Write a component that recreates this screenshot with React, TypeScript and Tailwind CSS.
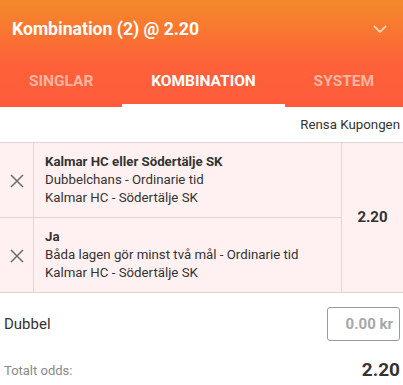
import React from "react";

function XIcon() {
  return (
    <svg width="16" height="16" viewBox="0 0 16 16" fill="none" stroke="#6b6b6b" strokeWidth="1.5" strokeLinecap="butt">
      <path d="M2 2 L14 14 M14 2 L2 14" />
    </svg>
  );
}

function Bet({ title, market, match }: { title: string; market: string; match: string }) {
  return (
    <div className="flex h-[74px]">
      <div className="w-[34px] flex items-center justify-center border-r border-[#e6d2d2] pt-[2px]">
        <XIcon />
      </div>
      <div className="flex-1 flex flex-col justify-center pl-[11px] text-[13.25px] leading-[18px] text-[#333]">
        <div className="font-bold">{title}</div>
        <div>{market}</div>
        <div>{match}</div>
      </div>
    </div>
  );
}

export default function App() {
  return (
    <div className="w-[403px] h-[385px] bg-white overflow-hidden" style={{ fontFamily: "Roboto, 'Liberation Sans', sans-serif" }}>
      <div className="bg-[linear-gradient(to_bottom,#f48a2a,#fe6139_60%,#ff5b3b)] h-[107px] flex flex-col">
        <div className="h-[56px] flex items-center justify-between pl-[12px] pr-[16px] pt-[2px]">
          <div className="text-white font-bold text-[17.6px]">Kombination (2) @ 2.20</div>
          <svg width="14" height="9" viewBox="0 0 14 9" fill="none" stroke="#ffd2b0" strokeWidth="1.8">
            <path d="M1 1 L7 7 L13 1" />
          </svg>
        </div>
        <div className="flex flex-1 text-[15.5px] font-bold uppercase">
          <div className="flex-auto flex items-center justify-center text-[#ffb5a0] pt-[1px]">Singlar</div>
          <div className="flex-auto flex items-center justify-center text-white border-b-[3px] border-white pt-[4px]">Kombination</div>
          <div className="flex-auto flex items-center justify-center text-[#ffb5a0] pt-[1px]">System</div>
        </div>
      </div>
      <div className="h-[36px] flex items-center justify-end pr-[3px] text-[13.3px] text-[#333] border-b border-[#e6d2d2]">
        Rensa Kupongen
      </div>
      <div className="flex bg-[#fff1f1] border-b border-[#e6d2d2]">
        <div className="flex-1 flex flex-col">
          <div className="border-b border-[#e6d2d2]">
            <Bet title="Kalmar HC eller Södertälje SK" market="Dubbelchans - Ordinarie tid" match="Kalmar HC - Södertälje SK" />
          </div>
          <Bet title="Ja" market="Båda lagen gör minst två mål - Ordinarie tid" match="Kalmar HC - Södertälje SK" />
        </div>
        <div className="w-[62px] border-l border-[#e6d2d2] flex items-center justify-center font-bold text-[15px] text-[#333]">
          2.20
        </div>
      </div>
      <div className="flex items-center justify-between pl-[4px] pr-[3px] pt-[14px]">
        <div className="text-[15px] text-[#333]">Dubbel</div>
        <div className="w-[73px] h-[34px] border border-[#9a9a9a] rounded-[3px] flex items-center justify-end pr-[6px] text-[15px] font-bold text-[#a8a8a8]">
          0.00 kr
        </div>
      </div>
      <div className="flex items-center justify-between pl-[4px] pr-[3px] mt-[15px]">
        <div className="text-[13px] text-[#8a8a8a]">Totalt odds:</div>
        <div className="text-[19px] font-bold text-[#333]">2.20</div>
      </div>
    </div>
  );
}
